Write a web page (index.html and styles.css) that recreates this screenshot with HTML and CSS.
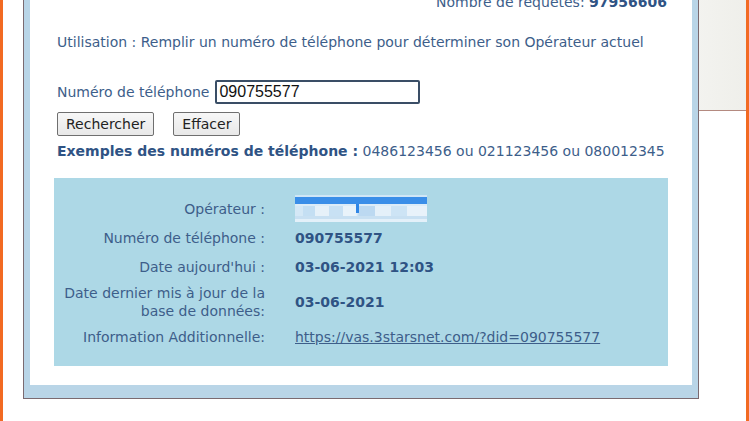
FILE: index.html
```html
<!DOCTYPE html>
<html lang="fr">
<head>
<meta charset="utf-8">
<title>Opérateur</title>
<link rel="stylesheet" href="styles.css">
</head>
<body>
<div class="page">
  <div class="backdrop-head"></div>
  <div class="dialog">
    <div class="inner">
      <div class="count">Nombre de requêtes: <b>97956606</b></div>
      <div class="usage">Utilisation : Remplir un numéro de téléphone pour déterminer son Opérateur actuel</div>
      <div class="field">
        <label class="field-label" for="tel">Numéro de téléphone</label>
        <input id="tel" class="tel-input" type="text" value="090755577">
      </div>
      <div class="buttons">
        <button class="btn" type="button">Rechercher</button>
        <button class="btn" type="button">Effacer</button>
      </div>
      <div class="examples"><b>Exemples des numéros de téléphone :</b> 0486123456 ou 021123456 ou 080012345</div>
      <div class="result">
        <div class="row">
          <div class="lbl">Opérateur :</div>
          <div class="val"><span class="redacted"><span class="redacted-text">xxxx xxxxx</span></span></div>
        </div>
        <div class="row">
          <div class="lbl">Numéro de téléphone :</div>
          <div class="val strong">090755577</div>
        </div>
        <div class="row">
          <div class="lbl">Date aujourd'hui :</div>
          <div class="val strong">03-06-2021 12:03</div>
        </div>
        <div class="row two">
          <div class="lbl">Date dernier mis à jour de la<br>base de données:</div>
          <div class="val strong">03-06-2021</div>
        </div>
        <div class="row">
          <div class="lbl">Information Additionnelle:</div>
          <div class="val"><a class="link" href="#">https://vas.3starsnet.com/?did=090755577</a></div>
        </div>
      </div>
    </div>
  </div>
</div>
</body>
</html>
```
FILE: styles.css
```css
html, body {
  margin: 0;
  padding: 0;
  width: 749px;
  height: 421px;
  overflow: hidden;
  background: #ffffff;
}

.page {
  position: relative;
  box-sizing: border-box;
  width: 749px;
  height: 421px;
  border-left: 3px solid #f26a22;
  border-right: 3px solid #f26a22;
  background: #ffffff;
  font-family: "DejaVu Sans", sans-serif;
  font-size: 14px;
  color: #3d5e8a;
}

.backdrop-head {
  margin-left: 680px;
  height: 110px;
  background: linear-gradient(90deg, #f4f4f1 0%, #efefea 100%);
  border-bottom: 1px solid #b48a80;
}

.dialog {
  position: absolute;
  left: 20px;
  top: 0;
  width: 676px;
  height: 399px;
  box-sizing: border-box;
  border: 1px solid #7b6a70;
  border-top: none;
  background: #b9d5e7;
  padding: 0 6px 6px 6px;
}

.inner {
  box-sizing: border-box;
  height: 100%;
  background: #ffffff;
  padding: 0 24px;
  line-height: 18px;
}

.count {
  margin-top: -7px;
  text-align: right;
  padding-right: 1px;
}

.count b {
  color: #2f5384;
}

.usage {
  margin-top: 22px;
  padding-left: 3px;
}

.field {
  margin-top: 29px;
  display: flex;
  align-items: center;
  gap: 6px;
  padding-left: 3px;
}

.tel-input {
  box-sizing: border-box;
  width: 205px;
  height: 24px;
  border: 2px solid #3a4e66;
  border-radius: 2px;
  padding: 0 2px;
  font-family: "Liberation Sans", Arial, sans-serif;
  font-size: 16px;
  color: #111;
  background: #fff;
}

.buttons {
  margin-top: 8px;
  display: flex;
  gap: 19px;
  padding-left: 3px;
}

.btn {
  box-sizing: border-box;
  height: 24px;
  padding: 0 8px;
  font-family: "DejaVu Sans", sans-serif;
  font-size: 14px;
  color: #222;
  background: linear-gradient(#f7f7f7, #e8e8e8);
  border: 1px solid #6f6f6f;
  border-radius: 2px;
}

.examples {
  margin-top: 6px;
  padding-left: 3px;
  white-space: nowrap;
}

.examples b {
  color: #2f5384;
}

.result {
  margin-top: 18px;
  background: #add8e6;
  padding: 22px 0 20px 0;
  display: flex;
  flex-direction: column;
  gap: 11px;
}

.row {
  display: grid;
  grid-template-columns: 211px 1fr;
  column-gap: 30px;
  align-items: center;
}

.row.two {
  margin: -3px 0;
}

.lbl {
  text-align: right;
}

.val.strong {
  font-weight: bold;
  color: #2f5384;
}

.link {
  color: #3d5e8a;
  text-decoration: underline;
}

.redacted {
  display: inline-block;
  vertical-align: top;
  margin: -5px 0 -4px 0;
  width: 132px;
  height: 27px;
  background:
    linear-gradient(90deg, transparent 61px, #2f86e6 61px, #2f86e6 64px, transparent 64px) 0 9px / 100% 9px no-repeat,
    linear-gradient(90deg, #d4e8f6 0 8px, #c4dff3 8px 20px, #e6f1f9 20px 34px, #c8e1f4 34px 48px, #e9f3fa 48px 61px, #bcd9f1 64px 80px, #e4f0f9 80px 96px, #cde4f5 96px 112px, #e8f2fa 112px) 0 11px / 100% 10px no-repeat,
    linear-gradient(#cfe6f6 0 2px, #3a8ee8 2px 9px, #dcecf8 9px 21px, #c8e0f2 21px 24px, #e3f0f9 24px);
  overflow: hidden;
}

.redacted-text {
  display: block;
  color: transparent;
  font-size: 1px;
}
```
